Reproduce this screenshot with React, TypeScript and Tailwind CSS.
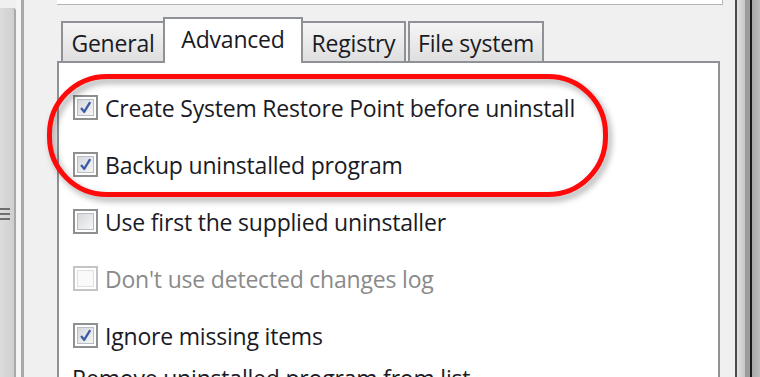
import React from 'react';

type Option = {
  label: string;
  checked: boolean;
  disabled?: boolean;
};

const options: Option[] = [
  { label: 'Create System Restore Point before uninstall', checked: true },
  { label: 'Backup uninstalled program', checked: true },
  { label: 'Use first the supplied uninstaller', checked: false },
  { label: "Don't use detected changes log", checked: false, disabled: true },
  { label: 'Ignore missing items', checked: true },
];

const font = { fontFamily: '"Open Sans", "Noto Sans", sans-serif' };

const CheckBox = ({ checked, disabled }: { checked: boolean; disabled?: boolean }) => (
  <div
    className={
      disabled
        ? 'w-[25px] h-[25px] shrink-0 border-2 border-[#c4c4c4] bg-white p-[2px]'
        : 'w-[25px] h-[25px] shrink-0 border-2 border-[#8e8f8f] bg-white p-[2px]'
    }
  >
    <div
      className={
        disabled
          ? 'w-full h-full border border-[#e0e0e0] bg-[#fafafa] relative'
          : 'w-full h-full border border-[#b8bcc4] bg-gradient-to-br from-[#d6d8dc] to-[#f6f6f6] relative'
      }
    >
      {checked && (
        <svg viewBox="0 0 17 17" className="absolute inset-0 w-full h-full">
          <path d="M3.5 9 L7 13.5 L13.8 2.5" fill="none" stroke="#3d5aa6" strokeWidth="2.6" strokeLinejoin="round" />
        </svg>
      )}
    </div>
  </div>
);

const Tab = ({ label, active, width }: { label: string; active?: boolean; width: string }) =>
  active ? (
    <div
      className={`${width} h-[46px] -mb-[2px] relative z-10 bg-white border-2 border-b-0 border-[#8e9297] flex items-start justify-center pt-[5px] text-[23px] tracking-[-0.2px] leading-[30px] text-[#1a1a24]`}
    >
      {label}
    </div>
  ) : (
    <div
      className={`${width} h-[40px] bg-gradient-to-b from-[#f5f5f5] to-[#dfdfdf] border-2 border-b-0 border-[#8e9297] flex items-start justify-center pt-[5px] text-[23px] tracking-[-0.2px] leading-[30px] text-[#1a1a24]`}
    >
      {label}
    </div>
  );

export default function App() {
  return (
    <div className="w-[760px] h-[377px] overflow-hidden bg-[#f0f0f0] flex" style={font}>
      {/* left pane edge */}
      <div className="w-[24px] h-full flex shrink-0">
        <div className="w-[16px] h-full pt-[8px]">
          <div className="h-full bg-gradient-to-r from-[#dcdcdc] to-[#cfcfcf] border-r-2 border-[#a9a9a9] rounded-tr-[3px] flex flex-col justify-start pt-[200px] gap-[3px]">
            <div className="w-[10px] h-[2px] bg-[#6f6f6f]" />
            <div className="w-[10px] h-[2px] bg-[#6f6f6f]" />
            <div className="w-[10px] h-[2px] bg-[#6f6f6f]" />
          </div>
        </div>
        <div className="w-[5px] h-full bg-[#f4f4f4]" />
        <div className="w-[3px] h-full bg-[#a8a8a8]" />
      </div>

      {/* main dialog area */}
      <div className="flex-1 h-full flex flex-col pl-[33px] pr-[15px] relative">
        <div className="h-[5px] bg-white border-b border-r border-[#b5b5b5] -mr-[3px] shrink-0" />

        <div className="mt-[11px] h-[45px] flex items-end pl-[4px] shrink-0">
          <Tab label="General" width="w-[104px]" />
          <div className="-ml-[2px]">
            <Tab label="Advanced" width="w-[140px]" active />
          </div>
          <div className="-ml-[2px]">
            <Tab label="Registry" width="w-[105px]" />
          </div>
          <div className="ml-[2px]">
            <Tab label="File system" width="w-[136px]" />
          </div>
        </div>

        <div className="flex-1 bg-white border-2 border-[#8e9297] pl-[14px] pt-[16px] flex flex-col">
          {options.map((o) => (
            <div key={o.label} className="h-[57px] shrink-0 flex items-center gap-[7px]">
              <CheckBox checked={o.checked} disabled={o.disabled} />
              <span
                className={
                  o.disabled
                    ? 'text-[23px] tracking-[-0.2px] leading-[30px] text-[#8a8a8a] whitespace-nowrap'
                    : 'text-[23px] tracking-[-0.2px] leading-[30px] text-[#1a1a24] whitespace-nowrap'
                }
              >
                {o.label}
              </span>
            </div>
          ))}
          <div className="text-[23px] tracking-[-0.2px] leading-[30px] text-[#1a1a24] whitespace-nowrap -ml-[1px] mt-[-1px]">
            Remove uninstalled program from list
          </div>
        </div>

        {/* red highlight ring */}
        <div className="absolute left-[23px] top-[74px] w-[561px] h-[123px] rounded-[60px] border-[5px] border-[#ff0a0a] drop-shadow-[3px_4px_3px_rgba(0,0,0,0.35)]" />
      </div>

      {/* right scroll edge */}
      <div className="w-[25px] h-full flex shrink-0">
        <div className="w-[2px] h-full bg-[#4a4a4a]" />
        <div className="w-[8px] h-full bg-gradient-to-r from-[#e2e2e2] to-[#c6c6c6]" />
        <div className="w-[5px] h-full bg-[#9c9c9c]" />
        <div className="w-[2px] h-full bg-[#1c1c1c]" />
        <div className="w-[8px] h-full bg-gradient-to-r from-[#a8a8a8] to-[#bdbdbd]" />
      </div>
    </div>
  );
}
